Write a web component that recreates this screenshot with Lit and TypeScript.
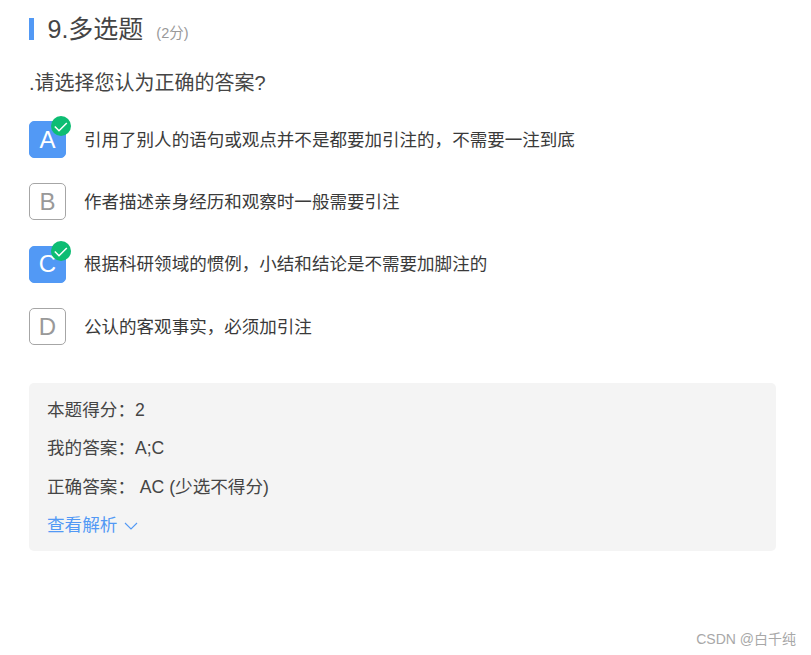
import {css, html, LitElement} from 'lit';
import {customElement} from 'lit/decorators.js';

const options = [
  {key: 'A', text: '引用了别人的语句或观点并不是都要加引注的，不需要一注到底', on: true},
  {key: 'B', text: '作者描述亲身经历和观察时一般需要引注', on: false},
  {key: 'C', text: '根据科研领域的惯例，小结和结论是不需要加脚注的', on: true},
  {key: 'D', text: '公认的客观事实，必须加引注', on: false},
];

@customElement('app-root')
export class AppRoot extends LitElement {
  static styles = css`
    :host {
      display: block;
      height: 655px;
      box-sizing: border-box;
      padding: 12px 35px 0 29px;
      position: relative;
      overflow: hidden;
      background: #fff;
      color: #454545;
      font-family: "Liberation Sans", "Noto Sans CJK SC", sans-serif;
    }

    .title {
      display: flex;
      align-items: center;
      height: 34px;
    }

    .title .bar {
      width: 5px;
      height: 22px;
      background: #5299f5;
      margin-right: 13.5px;
    }

    .title .name {
      font-size: 25px;
      line-height: 34px;
    }

    .title .score {
      font-size: 14.5px;
      color: #999;
      margin-left: 13px;
      padding-top: 4px;
    }

    .question {
      font-size: 20px;
      line-height: 28px;
      margin-top: 23px;
    }

    .options {
      display: flex;
      flex-direction: column;
      gap: 25.4px;
      margin-top: 24px;
    }

    .option {
      display: flex;
      align-items: center;
      height: 37px;
    }

    .letter {
      position: relative;
      width: 37px;
      height: 37px;
      box-sizing: border-box;
      border: 1px solid #a6a6a6;
      border-radius: 5px;
      display: flex;
      align-items: center;
      justify-content: center;
      font-size: 24px;
      color: #999;
      margin-right: 18px;
    }

    .letter.on {
      background: #5299f5;
      border-color: #5299f5;
      color: #fff;
    }

    .check {
      position: absolute;
      top: -6px;
      right: -6px;
      width: 20px;
      height: 20px;
    }

    .text {
      font-size: 17.55px;
      line-height: 26px;
      color: #3a3a3a;
    }

    .panel {
      margin-top: 38px;
      height: 168px;
      box-sizing: border-box;
      padding: 14px 18px 0;
      background: #f4f4f4;
      border-radius: 5px;
      font-size: 17.6px;
      line-height: 26px;
    }

    .panel .row {
      margin-bottom: 12.3px;
    }

    .more {
      display: flex;
      align-items: center;
      color: #5299f5;
    }

    .more svg {
      width: 14px;
      height: 8px;
      margin-left: 7px;
      margin-top: 2px;
    }

    .mark {
      position: absolute;
      right: 15px;
      bottom: 7px;
      font-size: 14px;
      line-height: 18px;
      color: #a8a8a8;
    }
  `;

  render() {
    return html`
      <div class="title">
        <span class="bar"></span>
        <span class="name">9.多选题</span>
        <span class="score">(2分)</span>
      </div>
      <div class="question">.请选择您认为正确的答案?</div>
      <div class="options">
        ${options.map(o => html`
          <div class="option">
            <div class="letter ${o.on ? 'on' : ''}">
              ${o.key}
              ${o.on ? html`
                <svg class="check" viewBox="0 0 20 20">
                  <circle cx="10" cy="10" r="10" fill="#0dbd73"></circle>
                  <path d="M3.8 10.5 8 14.7 15.8 7" fill="none" stroke="#fff" stroke-width="1.5"></path>
                </svg>` : ''}
            </div>
            <div class="text">${o.text}</div>
          </div>`)}
      </div>
      <div class="panel">
        <div class="row">本题得分：2</div>
        <div class="row">我的答案：A;C</div>
        <div class="row">正确答案： AC (少选不得分)</div>
        <div class="more">
          查看解析
          <svg viewBox="0 0 14 8">
            <path d="M1 1 7 7 13 1" fill="none" stroke="#5299f5" stroke-width="1.1"></path>
          </svg>
        </div>
      </div>
      <div class="mark">CSDN @白千纯</div>
    `;
  }
}
